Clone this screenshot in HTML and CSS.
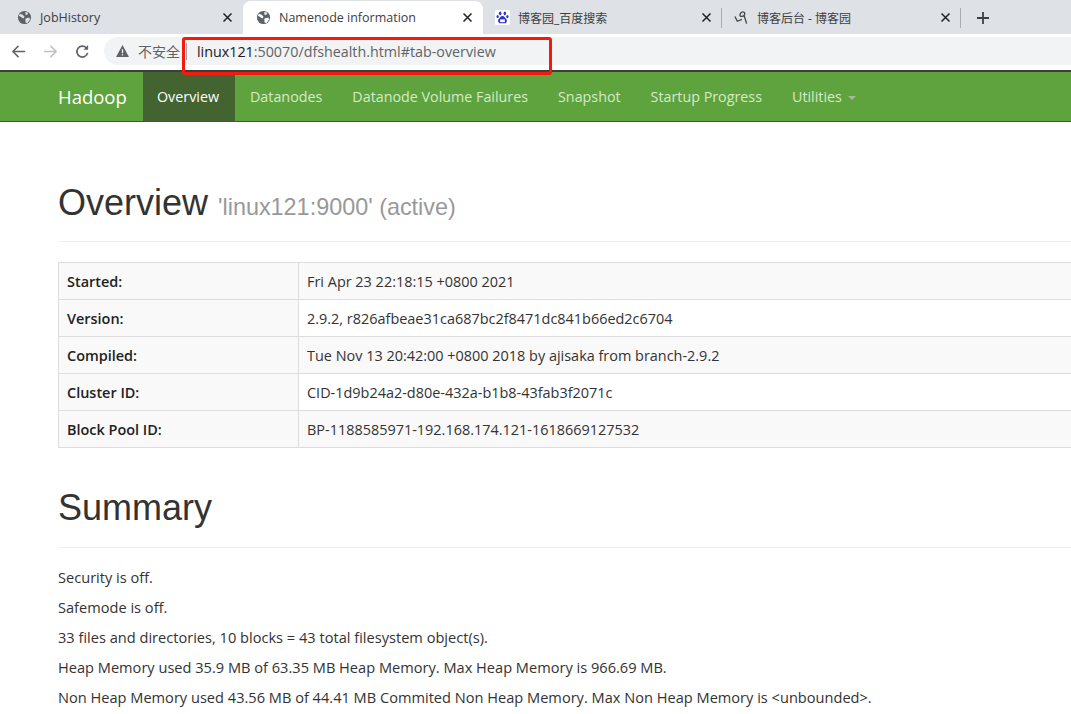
FILE: index.html
```html
<!DOCTYPE html>
<html lang="en">
<head>
<meta charset="utf-8">
<title>Namenode information</title>
<link rel="stylesheet" href="styles.css">
</head>
<body>
<div class="tabstrip">
  <div class="tab first">
    <svg class="fav" viewBox="0 0 16 16"><circle cx="8" cy="8" r="7" fill="#5f6368"/><path d="M3 4l3 1 2 2-1 2-2-1-3-2zM9 2l3 1-1 2-2 0zM9 9l4-1 1 2-3 4-2-1z" fill="#dee1e6"/></svg>
    <span class="tabtitle">JobHistory</span><svg class="close" viewBox="0 0 9 9"><path d="M.5.500l8 8M8.500.500l-8 8"/></svg>
  </div>
  <div class="tab active">
    <svg class="fav" viewBox="0 0 16 16"><circle cx="8" cy="8" r="7" fill="#5f6368"/><path d="M3 4l3 1 2 2-1 2-2-1-3-2zM9 2l3 1-1 2-2 0zM9 9l4-1 1 2-3 4-2-1z" fill="#fff"/></svg>
    <span class="tabtitle">Namenode information</span><svg class="close" viewBox="0 0 9 9"><path d="M.5.500l8 8M8.500.500l-8 8"/></svg>
  </div>
  <div class="tab third sep">
    <svg class="fav" viewBox="0 0 16 16"><rect width="16" height="16" rx="2" fill="#fff"/><g fill="#2932e1"><ellipse cx="5.500" cy="3.500" rx="1.300" ry="2"/><ellipse cx="10.500" cy="3.500" rx="1.300" ry="2"/><ellipse cx="2.800" cy="7" rx="1.200" ry="1.700"/><ellipse cx="13.200" cy="7" rx="1.200" ry="1.700"/><path d="M8 6.500c2 0 2.500 2 4 3 1.500 1.500.5 5-2 4.500H6c-2.500.5-3.500-3-2-4.500 1.500-1 2-3 4-3z"/></g><rect x="5.500" y="10" width="5" height="3" fill="#fff"/></svg>
    <span class="tabtitle cjk">博客园_百度搜索</span><svg class="close" viewBox="0 0 9 9"><path d="M.5.500l8 8M8.500.500l-8 8"/></svg>
  </div>
  <div class="tab fourth sep">
    <svg class="fav" viewBox="0 0 16 16" fill="none" stroke="#444" stroke-width="1.400"><path d="M1 7l2.500 5 5-2"/><path d="M6.500 6.500c-.5-2.500 1-4.500 3-4.500s2.500 2 1.500 3.500-3 1.500-4.500 1M10.500 5l3 9.500"/></svg>
    <span class="tabtitle cjk">博客后台 - 博客园</span><svg class="close" viewBox="0 0 9 9"><path d="M.5.500l8 8M8.500.500l-8 8"/></svg>
  </div>
  <svg class="newtab" viewBox="0 0 12 12"><path d="M6 0v12M0 6h12" stroke="#3c4043" stroke-width="1.800"/></svg>
</div>
<div class="toolbar">
  <svg class="navicon" viewBox="0 0 16 16"><path d="M15 8H2M8 2L2 8l6 6" fill="none" stroke="#5f6368" stroke-width="1.600"/></svg>
  <svg class="navicon" viewBox="0 0 16 16"><path d="M1 8h13M8 2l6 6-6 6" fill="none" stroke="#bdc1c6" stroke-width="1.600"/></svg>
  <svg class="navicon" viewBox="0 0 16 16"><path d="M13.500 9.500A5.800 5.800 0 1 1 12 4" fill="none" stroke="#5f6368" stroke-width="1.800"/><path d="M14 1v5H9z" fill="#5f6368"/></svg>
  <div class="omnibox">
    <svg class="warn" viewBox="0 0 14 13"><path d="M7 0l7 13H0z" fill="#5f6368"/><path d="M6.300 4.500h1.400v4.500H6.300zM6.300 10h1.400v1.400H6.300z" fill="#f1f3f4"/></svg>
    <span class="insecure">不安全</span>
    <span class="divider"></span>
    <span class="url"><span class="host">linux121</span>:50070/dfshealth.html#tab-overview</span>
  </div>
</div>
<nav class="navbar">
  <a class="brand">Hadoop</a>
  <a class="navlink current">Overview</a>
  <a class="navlink">Datanodes</a>
  <a class="navlink">Datanode Volume Failures</a>
  <a class="navlink">Snapshot</a>
  <a class="navlink">Startup Progress</a>
  <a class="navlink">Utilities <span class="caret"></span></a>
</nav>
<main class="content">
  <div class="pagehead first-head">
    <h1>Overview <small>'linux121:9000' (active)</small></h1>
  </div>
  <table class="info">
    <tr><th>Started:</th><td>Fri Apr 23 22:18:15 +0800 2021</td></tr>
    <tr><th>Version:</th><td>2.9.2, r826afbeae31ca687bc2f8471dc841b66ed2c6704</td></tr>
    <tr><th>Compiled:</th><td>Tue Nov 13 20:42:00 +0800 2018 by ajisaka from branch-2.9.2</td></tr>
    <tr><th>Cluster ID:</th><td>CID-1d9b24a2-d80e-432a-b1b8-43fab3f2071c</td></tr>
    <tr><th>Block Pool ID:</th><td>BP-1188585971-192.168.174.121-1618669127532</td></tr>
  </table>
  <div class="pagehead">
    <h1>Summary</h1>
  </div>
  <p>Security is off.</p>
  <p>Safemode is off.</p>
  <p>33 files and directories, 10 blocks = 43 total filesystem object(s).</p>
  <p>Heap Memory used 35.9 MB of 63.35 MB Heap Memory. Max Heap Memory is 966.69 MB.</p>
  <p>Non Heap Memory used 43.56 MB of 44.41 MB Commited Non Heap Memory. Max Non Heap Memory is &lt;unbounded&gt;.</p>
</main>
<div class="annotation"></div>
</body>
</html>
```

FILE: styles.css
```css
* { box-sizing: border-box; }
html, body { margin: 0; height: 714px; overflow: hidden; background: #fff; }
body { position: relative; font-family: "Open Sans", "Noto Sans CJK SC", sans-serif; color: #333; }

.tabstrip { height: 34px; background: #dee1e6; display: flex; align-items: stretch; padding-top: 1px; font-size: 12.5px; color: #3c4043; }
.tab { width: 239px; display: flex; align-items: center; padding: 0 11px 0 12px; position: relative; }
.tab.first { width: 243px; padding-left: 17px; }
.tab.active { width: 240px; background: #fff; border-radius: 8px 8px 0 0; padding-left: 13px; }
.tab.third { width: 239px; padding-left: 12px; }
.tab.sep::after { content: ""; position: absolute; right: 0; top: 7px; height: 20px; width: 1px; background: #a9acb0; }
.fav { width: 15px; height: 15px; flex: none; }
.tabtitle { margin-left: 8px; flex: 1; white-space: nowrap; }
.tabtitle.cjk { font-size: 12px; }
.close { width: 9px; height: 9px; flex: none; fill: none; stroke: #202124; stroke-width: 1.500; }
.newtab { width: 12px; height: 12px; margin: 11px 0 0 16px; }

.toolbar { height: 38px; background: #fff; border-bottom: 2px solid #3a3f3a; display: flex; align-items: center; padding: 0 0 2px 11px; gap: 17px; }
.navicon { width: 15px; height: 15px; flex: none; }
.omnibox { flex: 1; margin-left: -3px; height: 28px; background: #f1f3f4; border-radius: 14px 0 0 14px; display: flex; align-items: center; padding-left: 12px; }
.warn { width: 13px; height: 12px; flex: none; }
.insecure { margin-left: 9px; font-size: 14px; color: #5f6368; }
.divider { width: 1px; height: 17px; background: #9aa0a6; margin: 0 10px 0 6px; }
.url { font-size: 14.3px; color: #5f6368; }
.host { color: #202124; }

.navbar { height: 50px; background: #5fa33e; border-bottom: 1px solid #3f5a2c; display: flex; align-items: stretch; padding-left: 58px; font-size: 14.3px; color: #d5eac9; }
.brand { font-size: 18.5px; color: #fff; line-height: 50px; width: 85px; }
.navlink { padding: 0 15px; line-height: 50px; white-space: nowrap; }
.navlink.current { background: #436431; color: #fff; padding: 0 16px 0 14px; }
.caret { display: inline-block; width: 0; height: 0; margin-left: 2px; vertical-align: middle; border-top: 4px solid #a6b89d; border-left: 4px solid transparent; border-right: 4px solid transparent; }

.content { padding: 0 0 0 58px; width: 1100px; font-size: 14.6px; line-height: 20px; }
.pagehead { border-bottom: 1px solid #eee; margin-bottom: 19px; height: 80px; padding-top: 20px; }
.pagehead.first-head { height: 120px; padding-top: 61px; margin-bottom: 20px; }
h1 { margin: 0; font: 400 36px/39.6px "Liberation Sans", Arial, sans-serif; color: #333; }
small { font-size: 23.4px; color: #999; }

.info { width: 100%; border-collapse: collapse; border: 1px solid #ddd; margin-bottom: 20px; }
.info th, .info td { border: 1px solid #ddd; height: 37px; padding: 1px 8px 0; text-align: left; font-size: 14.45px; }
.info th { width: 240px; background: #f9f9f9; font-weight: 600; color: #222; }
.info tr:nth-child(odd) td { background: #f9f9f9; }

p { margin: 0 0 10px; }

.annotation { position: absolute; left: 182px; top: 37px; width: 370px; height: 38px; border: 3px solid #f3190d; border-radius: 3px; }
```
